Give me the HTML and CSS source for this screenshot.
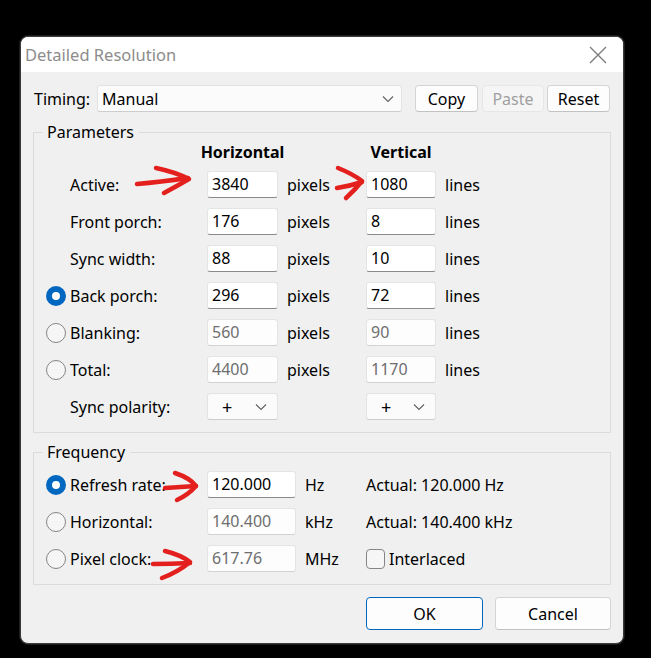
FILE: index.html
```html
<!DOCTYPE html>
<html lang="en">
<head>
    <meta charset="UTF-8">
    <title>Detailed Resolution</title>
    <link rel="stylesheet" href="styles.css">
</head>
<body>
<div class="dialog">
    <div class="titlebar">
        <span class="title">Detailed Resolution</span>
        <svg class="close" width="18" height="18" viewBox="0 0 18 18">
            <path d="M1 1 L17 17 M17 1 L1 17" stroke="#7a7a7a" stroke-width="1.3" fill="none"/>
        </svg>
    </div>
    <div class="content">
        <div class="timing-row">
            <span class="timing-label">Timing:</span>
            <div class="combo combo-wide">
                <span>Manual</span>
                <svg width="12" height="8" viewBox="0 0 12 8"><path d="M1 1.5 L6 6.5 L11 1.5" stroke="#606060" stroke-width="1.1" fill="none"/></svg>
            </div>
            <button class="btn btn-copy">Copy</button>
            <button class="btn btn-paste" disabled>Paste</button>
            <button class="btn btn-reset">Reset</button>
        </div>

        <fieldset class="group params">
            <legend>Parameters</legend>
            <div class="grid">
                <div></div><div></div>
                <div class="head">Horizontal</div><div></div>
                <div class="head">Vertical</div><div></div>

                <div></div><div class="lbl">Active:</div>
                <div class="field">3840</div><div class="unit">pixels</div>
                <div class="field">1080</div><div class="unit">lines</div>

                <div></div><div class="lbl">Front porch:</div>
                <div class="field">176</div><div class="unit">pixels</div>
                <div class="field">8</div><div class="unit">lines</div>

                <div></div><div class="lbl">Sync width:</div>
                <div class="field">88</div><div class="unit">pixels</div>
                <div class="field">10</div><div class="unit">lines</div>

                <div><span class="radio on"></span></div><div class="lbl">Back porch:</div>
                <div class="field">296</div><div class="unit">pixels</div>
                <div class="field">72</div><div class="unit">lines</div>

                <div><span class="radio"></span></div><div class="lbl">Blanking:</div>
                <div class="field off">560</div><div class="unit">pixels</div>
                <div class="field off">90</div><div class="unit">lines</div>

                <div><span class="radio"></span></div><div class="lbl">Total:</div>
                <div class="field off">4400</div><div class="unit">pixels</div>
                <div class="field off">1170</div><div class="unit">lines</div>

                <div></div><div class="lbl">Sync polarity:</div>
                <div class="combo polarity"><span>+</span><svg width="12" height="8" viewBox="0 0 12 8"><path d="M1 1.5 L6 6.5 L11 1.5" stroke="#606060" stroke-width="1.1" fill="none"/></svg></div>
                <div></div>
                <div class="combo polarity"><span>+</span><svg width="12" height="8" viewBox="0 0 12 8"><path d="M1 1.5 L6 6.5 L11 1.5" stroke="#606060" stroke-width="1.1" fill="none"/></svg></div>
                <div></div>
            </div>
        </fieldset>

        <fieldset class="group freq">
            <legend>Frequency</legend>
            <div class="grid grid-freq">
                <div><span class="radio on"></span></div><div class="lbl">Refresh rate:</div>
                <div class="field">120.000</div><div class="unit">Hz</div>
                <div class="actual">Actual: 120.000 Hz</div>

                <div><span class="radio"></span></div><div class="lbl">Horizontal:</div>
                <div class="field off">140.400</div><div class="unit">kHz</div>
                <div class="actual">Actual: 140.400 kHz</div>

                <div><span class="radio"></span></div><div class="lbl">Pixel clock:</div>
                <div class="field off">617.76</div><div class="unit">MHz</div>
                <div class="actual"><span class="check"></span>Interlaced</div>
            </div>
        </fieldset>

        <div class="actions">
            <button class="btn btn-ok">OK</button>
            <button class="btn btn-cancel">Cancel</button>
        </div>
    </div>
</div>

<svg class="marks" width="651" height="658" viewBox="0 0 651 658">
    <g stroke="#e4201e" stroke-width="4.5" fill="none" stroke-linecap="round" stroke-linejoin="round">
        <path d="M137 184 Q160 182 188 178"/>
        <path d="M156 168 Q175 172 189 179 Q177 186 164 193"/>
        <path d="M337 188 Q350 186 362 182"/>
        <path d="M338 168 Q353 174 362 181 Q355 190 346 198"/>
        <path d="M165 488 Q180 487 196 486"/>
        <path d="M175 473 Q190 478 196 486 Q188 495 177 500"/>
        <path d="M153 564 Q170 564 190 563"/>
        <path d="M165 551 Q181 555 190 562 Q178 572 162 578"/>
    </g>
</svg>
</body>
</html>
```

FILE: styles.css
```css
body {
    margin: 0;
    background-color: #000;
    width: 651px;
    height: 658px;
    position: relative;
    font-family: "Noto Sans", "Open Sans", sans-serif;
    font-size: 16px;
    color: #000;
}
.dialog {
    position: absolute;
    left: 20px;
    top: 36px;
    width: 602px;
    height: 606px;
    background-color: #f0f0f0;
    border: 1px solid #3a3a3a;
    border-radius: 8px;
    overflow: hidden;
    box-shadow: 0 0 0 1px #1c1c1c;
}
.titlebar {
    height: 35px;
    background-color: #fff;
    display: flex;
    align-items: center;
    justify-content: space-between;
    padding: 0 16px 0 4px;
}
.title {
    color: #8c8c8c;
    font-size: 16.5px;
}
.content {
    padding: 13px 12px 0 12px;
}
.timing-row {
    display: flex;
    align-items: center;
    height: 27px;
}
.timing-label {
    width: 63px;
    padding-left: 1px;
}
.combo {
    box-sizing: border-box;
    height: 27px;
    display: flex;
    align-items: center;
    justify-content: space-between;
    background-color: #fbfbfb;
    border: 1px solid #e3e3e3;
    border-bottom-color: #cdcdcd;
    border-radius: 3px;
}
.combo-wide {
    width: 305px;
    padding: 0 7px 0 4px;
    margin-right: 13px;
}
.btn {
    box-sizing: border-box;
    height: 27px;
    background-color: #fdfdfd;
    border: 1px solid #d4d4d4;
    border-bottom-color: #c2c2c2;
    border-radius: 4px;
    font-family: inherit;
    font-size: 16px;
    color: #000;
    padding: 0;
}
.btn-copy { width: 63px; margin-right: 4px; }
.btn-paste {
    width: 62px;
    margin-right: 3px;
    background-color: #f5f5f5;
    border-color: #e6e6e6;
    color: #a0a0a0;
}
.btn-reset { width: 63px; }

.group {
    margin: 9px 0 0 0;
    padding: 0 0 12px 0;
    border: 1px solid #dcdcdc;
    min-width: 0;
}
.group legend {
    margin-left: 8px;
    padding: 0 5px;
    line-height: 22px;
}
.freq {
    margin-top: 8px;
}
.grid {
    display: grid;
    grid-template-columns: 36px 137px 71px 88px 70px auto;
    grid-template-rows: 18px;
    grid-auto-rows: 27px;
    row-gap: 10px;
    align-items: center;
}
.grid-freq {
    grid-template-columns: 36px 137px 89px 70px auto;
    grid-template-rows: 27px;
    margin-top: 8px;
}
.head {
    font-weight: bold;
    justify-self: center;
    white-space: nowrap;
}
.lbl {
    white-space: nowrap;
}
.field {
    box-sizing: border-box;
    height: 27px;
    line-height: 25px;
    background-color: #fff;
    border: 1px solid #e4e4e4;
    border-bottom-color: #8a8a8a;
    border-radius: 3px;
    padding-left: 4px;
}
.field.off {
    color: #6e6e6e;
    border-bottom-color: #d2d2d2;
    background-color: #fdfdfd;
}
.unit {
    padding-left: 9px;
}
.polarity {
    padding: 0 10px 0 14px;
    font-size: 18px;
}
.radio {
    display: block;
    box-sizing: border-box;
    width: 20px;
    height: 20px;
    margin-left: 12px;
    border: 1px solid #858585;
    border-radius: 50%;
    background-color: #f6f6f6;
}
.radio.on {
    border: 6px solid #0067c0;
    background-color: #fff;
}
.actual {
    display: flex;
    align-items: center;
    white-space: nowrap;
}
.check {
    box-sizing: border-box;
    width: 19px;
    height: 20px;
    border: 1px solid #858585;
    border-radius: 4px;
    background-color: #f6f6f6;
    margin-right: 4px;
}
.actions {
    display: flex;
    justify-content: flex-end;
    gap: 12px;
    margin-top: 12px;
}
.btn-ok, .btn-cancel {
    width: 117px;
    height: 33px;
}
.btn-cancel {
    width: 116px;
}
.btn-ok {
    border-color: #0067c0;
}
.marks {
    position: absolute;
    left: 0;
    top: 0;
    pointer-events: none;
}
```
